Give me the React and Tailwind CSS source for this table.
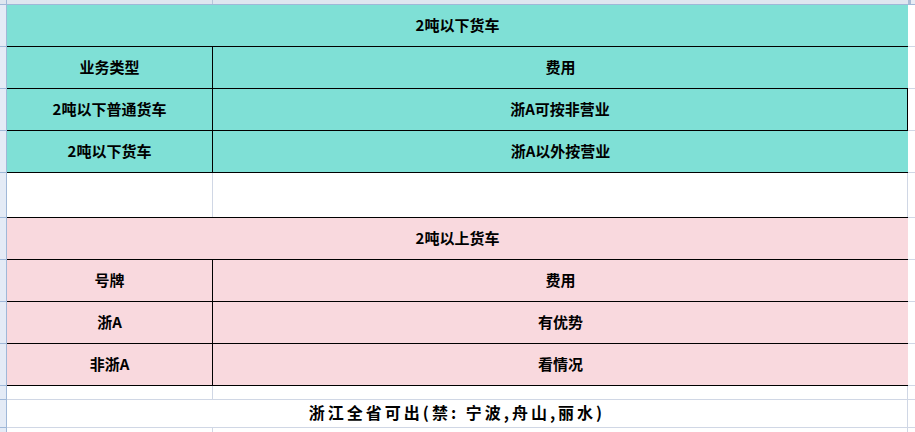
import React from "react";

const TEAL = "bg-[#7fe0d6]";
const PINK = "bg-[#f9d9de]";

function Gutter() {
  return <div className="w-[7px] shrink-0 bg-[#e4ebf6] border-r border-b border-[#a0b8d8]" />;
}

function Right() {
  return <div className="flex-1 bg-white border-b border-[#d0d7e5]" />;
}

function Row({ h, children }) {
  return <div className={"flex shrink-0 " + h}>{children}</div>;
}

const txt = "font-bold text-[15px] text-black leading-none";

function Title({ bg, text }) {
  return (
    <div className={"w-[901px] shrink-0 flex items-center justify-center pb-[3px] border-b border-black " + bg}>
      <span className={txt}>{text}</span>
    </div>
  );
}

function Two({ bg, left, right, rightBorder }) {
  return (
    <div className={"w-[901px] shrink-0 flex border-b border-black " + bg}>
      <div className="w-[206px] shrink-0 flex items-center justify-center pb-[3px] border-r border-black">
        <span className={txt}>{left}</span>
      </div>
      <div className={"flex-1 flex items-center justify-center pb-[3px]" + (rightBorder ? " border-r border-black" : "")}>
        <span className={txt}>{right}</span>
      </div>
    </div>
  );
}

function Blank({ bottom }) {
  return (
    <div className={"w-[901px] shrink-0 flex bg-white border-b " + bottom}>
      <div className="w-[206px] shrink-0 border-r border-[#d0d7e5]" />
      <div className="flex-1 border-r border-[#d0d7e5]" />
    </div>
  );
}

export default function App() {
  return (
    <div
      className="w-[915px] h-[432px] overflow-hidden bg-white flex flex-col"
      style={{ fontFamily: '"Noto Sans CJK SC", "Noto Sans", sans-serif' }}
    >
      {/* column header strip */}
      <div className="flex h-[5px] shrink-0">
        <div className="w-[7px] shrink-0 bg-[#dfe6f0] border-r border-b border-[#a0b8d8]" />
        <div className="w-[901px] shrink-0 flex bg-[#dfe6f0] border-b border-[#a0b8d8]">
          <div className="w-[206px] shrink-0 border-r border-[#b7c6da]" />
          <div className="flex-1" />
        </div>
        <div className="w-[3px] shrink-0 bg-[#a9bcd6] border-b border-[#a0b8d8]" />
        <div className="flex-1 bg-[#e8edf4] border-b border-[#a0b8d8]" />
      </div>

      <Row h="h-[42px]">
        <Gutter />
        <Title bg={TEAL} text="2吨以下货车" />
        <Right />
      </Row>
      <Row h="h-[42px]">
        <Gutter />
        <Two bg={TEAL} left="业务类型" right="费用" />
        <Right />
      </Row>
      <Row h="h-[42px]">
        <Gutter />
        <Two bg={TEAL} left="2吨以下普通货车" right="浙A可按非营业" rightBorder />
        <Right />
      </Row>
      <Row h="h-[42px]">
        <Gutter />
        <Two bg={TEAL} left="2吨以下货车" right="浙A以外按营业" />
        <Right />
      </Row>
      <Row h="h-[45px]">
        <Gutter />
        <Blank bottom="border-black" />
        <Right />
      </Row>
      <Row h="h-[42px]">
        <Gutter />
        <Title bg={PINK} text="2吨以上货车" />
        <Right />
      </Row>
      <Row h="h-[42px]">
        <Gutter />
        <Two bg={PINK} left="号牌" right="费用" />
        <Right />
      </Row>
      <Row h="h-[42px]">
        <Gutter />
        <Two bg={PINK} left="浙A" right="有优势" />
        <Right />
      </Row>
      <Row h="h-[42px]">
        <Gutter />
        <Two bg={PINK} left="非浙A" right="看情况" />
        <Right />
      </Row>
      <Row h="h-[14px]">
        <Gutter />
        <Blank bottom="border-[#d0d7e5]" />
        <Right />
      </Row>
      <Row h="h-[28px]">
        <Gutter />
        <div className="w-[901px] shrink-0 flex items-center justify-center pb-[3px] bg-white border-b border-r border-[#d0d7e5]">
          <span className="font-bold text-[16px] leading-none text-black tracking-[3px]">
            浙江全省可出(禁: 宁波,舟山,丽水)
          </span>
        </div>
        <Right />
      </Row>
      <Row h="h-[20px]">
        <Gutter />
        <Blank bottom="border-[#d0d7e5]" />
        <Right />
      </Row>
    </div>
  );
}
